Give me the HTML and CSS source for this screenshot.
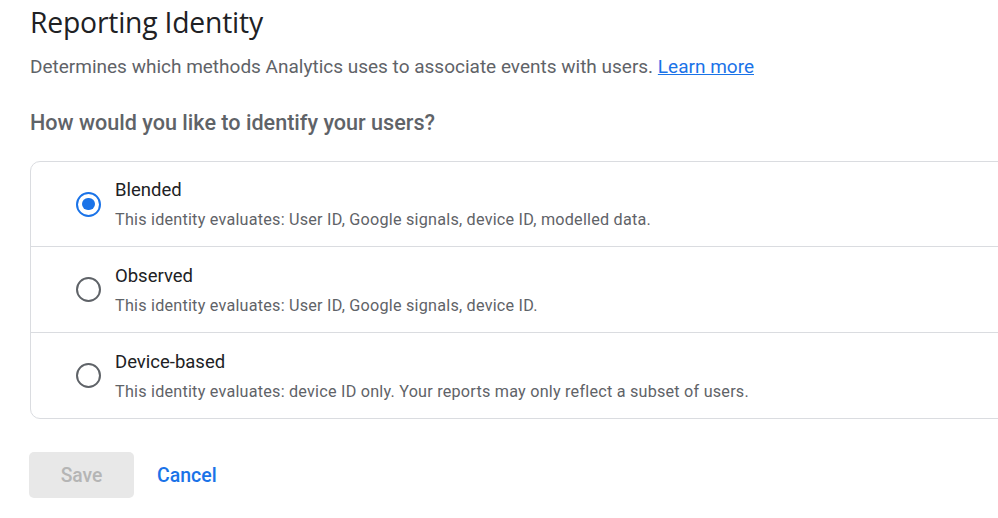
FILE: index.html
```html
<!DOCTYPE html>
<html>
<head>
<meta charset="utf-8">
<link rel="stylesheet" href="styles.css">
</head>
<body>
<main class="page">
  <h1 class="title">Reporting Identity</h1>
  <p class="subtitle">Determines which methods Analytics uses to associate events with users. <a href="#" class="link">Learn more</a></p>
  <h2 class="question">How would you like to identify your users?</h2>
  <div class="card">
    <label class="option">
      <span class="radio checked"></span>
      <span class="text">
        <span class="opt-title">Blended</span>
        <span class="opt-desc">This identity evaluates: User ID, Google signals, device ID, modelled data.</span>
      </span>
    </label>
    <label class="option">
      <span class="radio"></span>
      <span class="text">
        <span class="opt-title">Observed</span>
        <span class="opt-desc">This identity evaluates: User ID, Google signals, device ID.</span>
      </span>
    </label>
    <label class="option">
      <span class="radio"></span>
      <span class="text">
        <span class="opt-title">Device-based</span>
        <span class="opt-desc">This identity evaluates: device ID only. Your reports may only reflect a subset of users.</span>
      </span>
    </label>
  </div>
  <div class="actions">
    <button class="btn-save" disabled>Save</button>
    <a href="#" class="btn-cancel">Cancel</a>
  </div>
</main>
</body>
</html>
```
FILE: styles.css
```css
html, body {
  margin: 0;
  padding: 0;
  background: #fff;
  overflow: hidden;
}
body {
  font-family: Roboto, "Liberation Sans", sans-serif;
  color: #202124;
}
.page {
  padding: 4px 0 0 30px;
  width: 1100px;
}
.title {
  margin: 0;
  font-family: "Open Sans", Roboto, sans-serif;
  font-weight: 400;
  font-size: 28.3px;
  line-height: 36px;
  color: #202124;
  letter-spacing: -0.2px;
}
.subtitle {
  margin: 15px 0 0;
  font-size: 19px;
  line-height: 24px;
  color: #5f6368;
}
.link {
  color: #1a73e8;
  text-decoration: underline;
}
.question {
  margin: 32px 0 0;
  font-size: 21.6px;
  font-weight: 500;
  line-height: 24px;
  color: #5f6368;
}
.card {
  margin-top: 26px;
  width: 1000px;
  border: 1px solid #dadce0;
  border-radius: 10px;
  box-sizing: border-box;
}
.option {
  display: flex;
  align-items: center;
  height: 86px;
  border-top: 1px solid #dadce0;
  box-sizing: border-box;
}
.option:first-child {
  border-top: none;
  height: 84px;
}
.radio {
  width: 25px;
  height: 25px;
  box-sizing: border-box;
  border: 2.5px solid #5f6368;
  border-radius: 50%;
  margin-left: 45px;
  margin-right: 14px;
  flex: none;
  display: flex;
  align-items: center;
  justify-content: center;
}
.radio.checked {
  border-color: #1a73e8;
}
.radio.checked::after {
  content: "";
  width: 12.5px;
  height: 12.5px;
  border-radius: 50%;
  background: #1a73e8;
}
.text {
  display: flex;
  flex-direction: column;
  margin-top: 0;
}
.opt-title {
  font-size: 18.5px;
  line-height: 24px;
  color: #202124;
}
.opt-desc {
  margin-top: 8px;
  font-size: 16.2px;
  line-height: 20px;
  color: #5f6368;
  letter-spacing: 0.22px;
}
.actions {
  margin-top: 33px;
  display: flex;
  align-items: center;
  gap: 23px;
}
.btn-save {
  width: 105px;
  height: 46px;
  border: none;
  border-radius: 5px;
  background: #e8e8e8;
  color: #b5b5b5;
  font-family: Roboto, sans-serif;
  font-size: 19.3px;
  font-weight: 500;
  margin-left: -1px;
}
.btn-cancel {
  color: #1a73e8;
  font-size: 19.5px;
  font-weight: 500;
  text-decoration: none;
}
```
